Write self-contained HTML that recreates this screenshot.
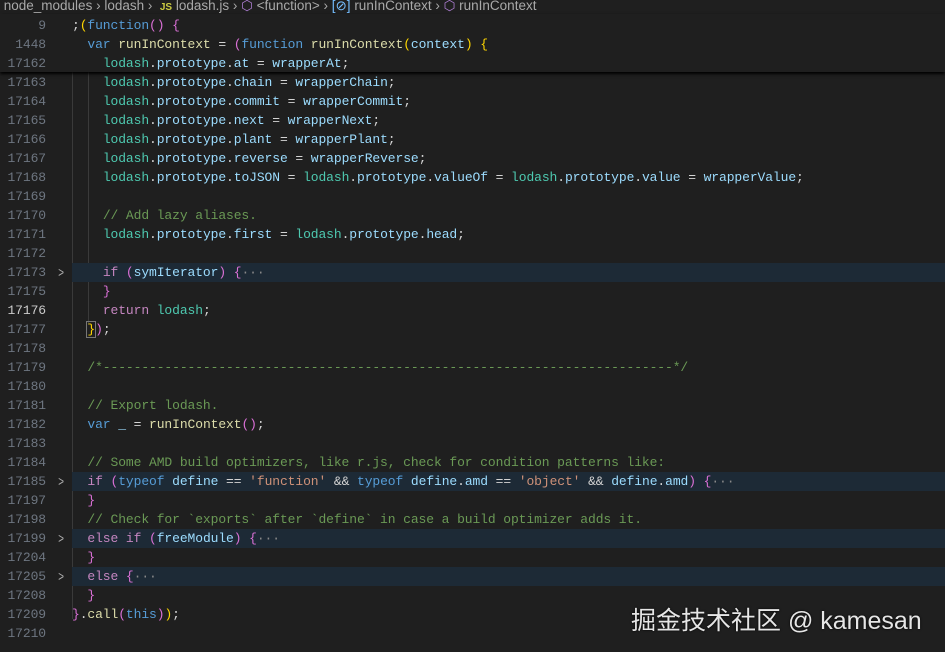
<!DOCTYPE html><html><head><meta charset="utf-8"><style>
body{margin:0;width:945px;height:652px;background:#1f1f1f;overflow:hidden;position:relative;font-family:"Liberation Mono",monospace;font-size:13px;letter-spacing:-0.1px;color:#d4d4d4}
.bc{position:absolute;top:0;left:0;width:945px;height:14px;font-family:"Liberation Sans",sans-serif;font-size:13.5px;letter-spacing:0;color:#a9a9a9;line-height:11px;white-space:nowrap}
.sticky{position:absolute;top:14px;left:0;width:945px;height:58px;background:#1f1f1f;box-shadow:0 2px 3px #000;z-index:2}
.r{position:absolute;left:0;width:945px;height:19px;line-height:19px;white-space:pre}
.ln{position:absolute;left:0;width:46px;text-align:right;color:#6e7681}
.c{position:absolute;left:72px}
.hl{position:absolute;left:72px;right:0;top:0;bottom:0;background:#1d2a36}
.ch{position:absolute;left:57px;color:#b0b0b0;font-family:"Liberation Sans",sans-serif;font-size:14px;transform:scaleX(0.7)}
.g{position:absolute;width:1px;background:#3a3a3a}
.t{color:#4ec9b0}.v{color:#9cdcfe}.k{color:#569cd6}.x{color:#c586c0}.f{color:#dcdcaa}.m{color:#6a9955}.s{color:#ce9178}.y{color:#ffd700}.p{color:#da70d6}.b{color:#179fff}.e{color:#8a8a8a}
.wm{position:absolute;left:631px;top:601px;font-family:"Liberation Sans","Noto Sans CJK SC",sans-serif;font-size:25px;letter-spacing:0;color:#e6e6e6;z-index:3;text-shadow:0 0 2px #000}
</style></head><body>
<div class="bc">&nbsp;node_modules › lodash › &nbsp;<span style="color:#cbcb41;font-weight:bold;font-size:10px">JS</span> lodash.js › <span style="color:#b180d7">⬡</span> &lt;function&gt; › <span style="color:#75beff">[⊘]</span> runInContext › <span style="color:#b180d7">⬡</span> runInContext</div>
<div class="sticky">
<div class="r" style="top:1.5px"><span class="ln">9</span><span class="c">;<span class="y">(</span><span class="k">function</span><span class="p">()</span> <span class="p">{</span></span></div>
<div class="r" style="top:20.5px"><span class="ln">1448</span><span class="c">  <span class="k">var</span> <span class="f">runInContext</span> = <span class="p">(</span><span class="k">function</span> <span class="f">runInContext</span><span class="y">(</span><span class="v">context</span><span class="y">)</span> <span class="y">{</span></span></div>
<div class="r" style="top:39.5px"><span class="ln">17162</span><span class="c">    <span class="t">lodash</span>.<span class="v">prototype</span>.<span class="v">at</span> = <span class="v">wrapperAt</span>;</span></div>
</div>
<div class="g" style="left:72px;top:72px;height:547px"></div>
<div class="g" style="left:88px;top:72px;height:253px"></div>
<div class="r" style="top:72.5px"><span class="ln">17163</span><span class="c">    <span class="t">lodash</span>.<span class="v">prototype</span>.<span class="v">chain</span> = <span class="v">wrapperChain</span>;</span></div>
<div class="r" style="top:91.5px"><span class="ln">17164</span><span class="c">    <span class="t">lodash</span>.<span class="v">prototype</span>.<span class="v">commit</span> = <span class="v">wrapperCommit</span>;</span></div>
<div class="r" style="top:110.5px"><span class="ln">17165</span><span class="c">    <span class="t">lodash</span>.<span class="v">prototype</span>.<span class="v">next</span> = <span class="v">wrapperNext</span>;</span></div>
<div class="r" style="top:129.5px"><span class="ln">17166</span><span class="c">    <span class="t">lodash</span>.<span class="v">prototype</span>.<span class="v">plant</span> = <span class="v">wrapperPlant</span>;</span></div>
<div class="r" style="top:148.5px"><span class="ln">17167</span><span class="c">    <span class="t">lodash</span>.<span class="v">prototype</span>.<span class="v">reverse</span> = <span class="v">wrapperReverse</span>;</span></div>
<div class="r" style="top:167.5px"><span class="ln">17168</span><span class="c">    <span class="t">lodash</span>.<span class="v">prototype</span>.<span class="v">toJSON</span> = <span class="t">lodash</span>.<span class="v">prototype</span>.<span class="v">valueOf</span> = <span class="t">lodash</span>.<span class="v">prototype</span>.<span class="v">value</span> = <span class="v">wrapperValue</span>;</span></div>
<div class="r" style="top:186.5px"><span class="ln">17169</span></div>
<div class="r" style="top:205.5px"><span class="ln">17170</span><span class="c">    <span class="m">// Add lazy aliases.</span></span></div>
<div class="r" style="top:224.5px"><span class="ln">17171</span><span class="c">    <span class="t">lodash</span>.<span class="v">prototype</span>.<span class="v">first</span> = <span class="t">lodash</span>.<span class="v">prototype</span>.<span class="v">head</span>;</span></div>
<div class="r" style="top:243.5px"><span class="ln">17172</span></div>
<div class="r" style="top:262.5px"><div class="hl"></div><span class="ln">17173</span><span class="ch">&gt;</span><span class="c">    <span class="x">if</span> <span class="p">(</span><span class="v">symIterator</span><span class="p">)</span> <span class="p">{</span><span class="e">···</span></span></div>
<div class="r" style="top:281.5px"><span class="ln">17175</span><span class="c">    <span class="p">}</span></span></div>
<div class="r" style="top:300.5px"><span class="ln" style="color:#ccc">17176</span><span class="c">    <span class="x">return</span> <span class="t">lodash</span>;</span></div>
<div class="r" style="top:319.5px"><span class="ln">17177</span><span class="c">  <span class="y" style="outline:1px solid #777">}</span><span class="p">)</span>;</span></div>
<div class="r" style="top:338.5px"><span class="ln">17178</span></div>
<div class="r" style="top:357.5px"><span class="ln">17179</span><span class="c">  <span class="m">/*--------------------------------------------------------------------------*/</span></span></div>
<div class="r" style="top:376.5px"><span class="ln">17180</span></div>
<div class="r" style="top:395.5px"><span class="ln">17181</span><span class="c">  <span class="m">// Export lodash.</span></span></div>
<div class="r" style="top:414.5px"><span class="ln">17182</span><span class="c">  <span class="k">var</span> <span class="v">_</span> = <span class="f">runInContext</span><span class="p">()</span>;</span></div>
<div class="r" style="top:433.5px"><span class="ln">17183</span></div>
<div class="r" style="top:452.5px"><span class="ln">17184</span><span class="c">  <span class="m">// Some AMD build optimizers, like r.js, check for condition patterns like:</span></span></div>
<div class="r" style="top:471.5px"><div class="hl"></div><span class="ln">17185</span><span class="ch">&gt;</span><span class="c">  <span class="x">if</span> <span class="p">(</span><span class="k">typeof</span> <span class="v">define</span> == <span class="s">'function'</span> &amp;&amp; <span class="k">typeof</span> <span class="v">define</span>.<span class="v">amd</span> == <span class="s">'object'</span> &amp;&amp; <span class="v">define</span>.<span class="v">amd</span><span class="p">)</span> <span class="p">{</span><span class="e">···</span></span></div>
<div class="r" style="top:490.5px"><span class="ln">17197</span><span class="c">  <span class="p">}</span></span></div>
<div class="r" style="top:509.5px"><span class="ln">17198</span><span class="c">  <span class="m">// Check for `exports` after `define` in case a build optimizer adds it.</span></span></div>
<div class="r" style="top:528.5px"><div class="hl"></div><span class="ln">17199</span><span class="ch">&gt;</span><span class="c">  <span class="x">else if</span> <span class="p">(</span><span class="v">freeModule</span><span class="p">)</span> <span class="p">{</span><span class="e">···</span></span></div>
<div class="r" style="top:547.5px"><span class="ln">17204</span><span class="c">  <span class="p">}</span></span></div>
<div class="r" style="top:566.5px"><div class="hl"></div><span class="ln">17205</span><span class="ch">&gt;</span><span class="c">  <span class="x">else</span> <span class="p">{</span><span class="e">···</span></span></div>
<div class="r" style="top:585.5px"><span class="ln">17208</span><span class="c">  <span class="p">}</span></span></div>
<div class="r" style="top:604.5px"><span class="ln">17209</span><span class="c"><span class="p">}</span>.<span class="f">call</span><span class="p">(</span><span class="k">this</span><span class="p">)</span><span class="y">)</span>;</span></div>
<div class="r" style="top:623.5px"><span class="ln">17210</span></div>
<div class="wm">掘金技术社区 @ kamesan</div>
</body></html>
